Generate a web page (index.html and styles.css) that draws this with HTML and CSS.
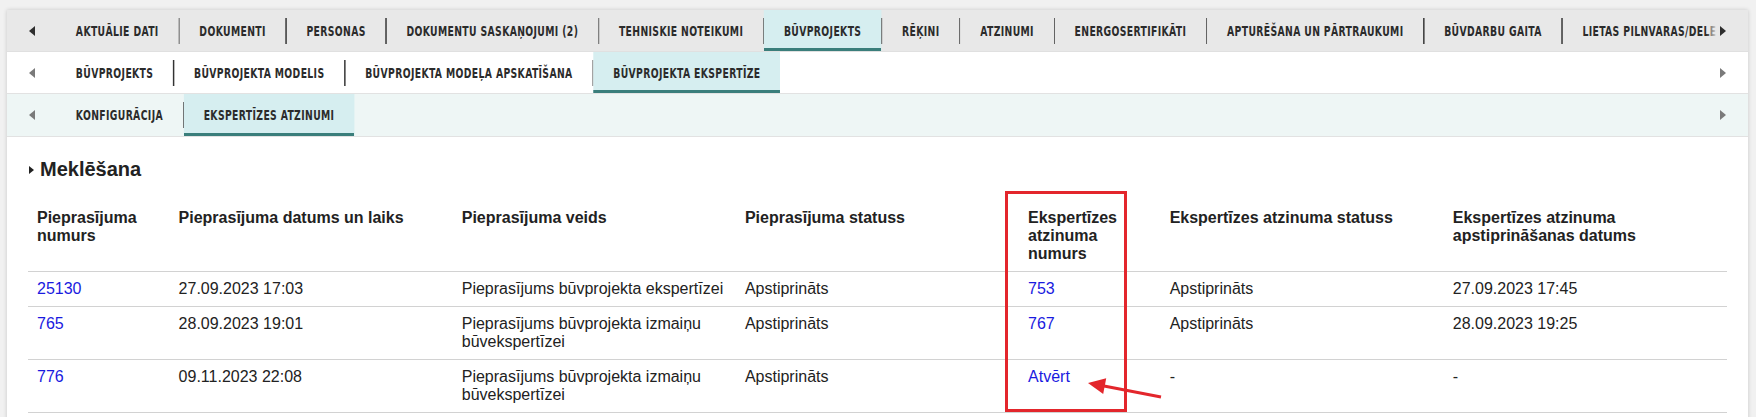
FILE: index.html
```html
<!DOCTYPE html>
<html lang="lv">
<head>
<meta charset="utf-8">
<title>Būvprojekta ekspertīze</title>
<link rel="stylesheet" href="styles.css">
</head>
<body>
<div class="page">
  <div class="panel">
    <div class="tabrow r1">
      <span class="arrow-left"><i class="tri-l"></i></span>
      <div class="tabs">
        <div class="strip">
          <span class="tab">AKTUĀLIE DATI</span><span class="sep"></span>
          <span class="tab">DOKUMENTI</span><span class="sep"></span>
          <span class="tab">PERSONAS</span><span class="sep"></span>
          <span class="tab">DOKUMENTU SASKAŅOJUMI (2)</span><span class="sep"></span>
          <span class="tab">TEHNISKIE NOTEIKUMI</span><span class="sep"></span>
          <span class="tab active">BŪVPROJEKTS</span><span class="sep"></span>
          <span class="tab">RĒĶINI</span><span class="sep"></span>
          <span class="tab">ATZINUMI</span><span class="sep"></span>
          <span class="tab">ENERGOSERTIFIKĀTI</span><span class="sep"></span>
          <span class="tab">APTURĒŠANA UN PĀRTRAUKUMI</span><span class="sep"></span>
          <span class="tab">BŪVDARBU GAITA</span><span class="sep"></span>
          <span class="tab">LIETAS PILNVARAS/DELEĢĒŠANA</span>
        </div>
      </div>
      <span class="arrow-right"><i class="tri-r"></i></span>
    </div>
    <div class="tabrow r2">
      <span class="arrow-left"><i class="tri-l"></i></span>
      <div class="tabs">
        <div class="strip">
          <span class="tab">BŪVPROJEKTS</span><span class="sep"></span>
          <span class="tab">BŪVPROJEKTA MODELIS</span><span class="sep"></span>
          <span class="tab">BŪVPROJEKTA MODEĻA APSKATĪŠANA</span><span class="sep"></span>
          <span class="tab active">BŪVPROJEKTA EKSPERTĪZE</span>
        </div>
      </div>
      <span class="arrow-right"><i class="tri-r"></i></span>
    </div>
    <div class="tabrow r3">
      <span class="arrow-left"><i class="tri-l"></i></span>
      <div class="tabs">
        <div class="strip">
          <span class="tab">KONFIGURĀCIJA</span><span class="sep"></span>
          <span class="tab active">EKSPERTĪZES ATZINUMI</span>
        </div>
      </div>
      <span class="arrow-right"><i class="tri-r"></i></span>
    </div>

    <div class="content">
      <h2 class="section-title"><i class="tri-title"></i>Meklēšana</h2>
      <table class="results">
        <colgroup>
          <col class="c1"><col class="c2"><col class="c2"><col class="c2"><col class="c1"><col class="c2"><col class="c2">
        </colgroup>
        <thead>
          <tr>
            <th>Pieprasījuma numurs</th>
            <th>Pieprasījuma datums un laiks</th>
            <th>Pieprasījuma veids</th>
            <th>Pieprasījuma statuss</th>
            <th>Ekspertīzes atzinuma numurs</th>
            <th>Ekspertīzes atzinuma statuss</th>
            <th>Ekspertīzes atzinuma apstiprināšanas datums</th>
          </tr>
        </thead>
        <tbody>
          <tr>
            <td><a href="#">25130</a></td>
            <td>27.09.2023 17:03</td>
            <td>Pieprasījums būvprojekta ekspertīzei</td>
            <td>Apstiprināts</td>
            <td><a href="#">753</a></td>
            <td>Apstiprināts</td>
            <td>27.09.2023 17:45</td>
          </tr>
          <tr>
            <td><a href="#">765</a></td>
            <td>28.09.2023 19:01</td>
            <td>Pieprasījums būvprojekta izmaiņu būvekspertīzei</td>
            <td>Apstiprināts</td>
            <td><a href="#">767</a></td>
            <td>Apstiprināts</td>
            <td>28.09.2023 19:25</td>
          </tr>
          <tr>
            <td><a href="#">776</a></td>
            <td>09.11.2023 22:08</td>
            <td>Pieprasījums būvprojekta izmaiņu būvekspertīzei</td>
            <td>Apstiprināts</td>
            <td><a href="#">Atvērt</a></td>
            <td>-</td>
            <td>-</td>
          </tr>
        </tbody>
      </table>
    </div>
  </div>

  <div class="mark-box"></div>
  <svg class="mark-arrow" width="90" height="40" viewBox="0 0 90 40" aria-hidden="true">
    <line x1="81" y1="27" x2="24" y2="16" stroke="#e3262c" stroke-width="3"/>
    <polygon points="8,13 23.2,24.1 26.2,8.3" fill="#e3262c"/>
  </svg>
</div>
</body>
</html>
```

FILE: styles.css
```css
html, body {
  margin: 0;
  padding: 0;
  overflow: hidden;
  height: 100%;
}

body {
  background: #f1f1f1;
  font-family: "Liberation Sans", Arial, sans-serif;
  color: #222;
}

.page {
  position: relative;
  padding: 10px 8px 0 7px;
}

.panel {
  background: #fff;
  box-shadow: 0 0 4px rgba(0, 0, 0, 0.18);
  min-height: 420px;
}

/* ---------- tab rows ---------- */
.tabrow {
  display: flex;
  height: 42px;
  box-sizing: border-box;
  border-bottom: 1px solid #e2e2e2;
  --row-bg: #fff;
  background: var(--row-bg);
}

.tabrow.r1 { --row-bg: #e8e8e8; border-bottom-color: #e0e0e0; }
.tabrow.r2 { --row-bg: #ffffff; }
.tabrow.r3 { --row-bg: #eef6f5; height: 43px; }

.arrow-left {
  flex: none;
  width: 49px;
  display: flex;
  align-items: center;
  justify-content: center;
}

.arrow-right {
  flex: none;
  position: relative;
  width: 42px;
  display: flex;
  align-items: center;
  padding-left: 14px;
  box-sizing: border-box;
  background: linear-gradient(to right, rgba(255, 255, 255, 0) 0, var(--row-bg) 11px);
}

.tri-l {
  width: 0;
  height: 0;
  border-top: 5px solid transparent;
  border-bottom: 5px solid transparent;
  border-right: 6px solid #7a7a7a;
}

.tri-r {
  width: 0;
  height: 0;
  border-top: 5px solid transparent;
  border-bottom: 5px solid transparent;
  border-left: 6px solid #7a7a7a;
}

.r1 .tri-l { border-right-color: #2e2e2e; }
.r1 .tri-r { border-left-color: #2e2e2e; }

.tabs {
  flex: 1;
  min-width: 0;
  margin-right: -42px;
  display: flex;
  overflow: hidden;
}

/* The reference uses a tall, very narrow display face; the closest
   installed face is condensed horizontally as a whole strip. */
.strip {
  flex: none;
  display: flex;
  align-items: center;
  height: 100%;
  transform: scaleX(0.735);
  transform-origin: 0 50%;
}

.tab {
  flex: none;
  height: 100%;
  box-sizing: border-box;
  display: flex;
  align-items: center;
  padding: 0 27px;
  font-family: "DejaVu Sans Condensed", "DejaVu Sans", sans-serif;
  font-weight: 700;
  font-size: 14px;
  letter-spacing: 0.5px;
  color: #2b2b2b;
  white-space: nowrap;
}

.tab.active {
  background: #d6eef0;
  box-shadow: inset 0 -3px 0 #3a7e7b;
}

.sep {
  flex: none;
  width: 1.36px;
  height: 26px;
  background: #333;
}

/* ---------- content ---------- */
.content {
  padding: 21px 21px 0 21px;
}

.section-title {
  display: flex;
  align-items: center;
  margin: 0 0 20px;
  font-size: 20px;
  line-height: 23px;
  font-weight: 700;
  color: #222;
}

.tri-title {
  width: 0;
  height: 0;
  margin: 0 6px 0 1px;
  border-top: 4.5px solid transparent;
  border-bottom: 4.5px solid transparent;
  border-left: 5px solid #222;
}

.results {
  width: 100%;
  border-collapse: collapse;
  table-layout: fixed;
  font-size: 16px;
}

.results col.c1 { width: 8.3333%; }
.results col.c2 { width: 16.6667%; }

.results th,
.results td {
  padding: 8px 9px;
  text-align: left;
  vertical-align: top;
  border-bottom: 1px solid #d2d2d2;
}

.results th {
  font-weight: 700;
  color: #222;
}

.results td {
  color: #222;
}

.results a {
  color: #1a1ae0;
  text-decoration: none;
}

/* ---------- annotation overlay ---------- */
.mark-box {
  position: absolute;
  left: 1005px;
  top: 191px;
  width: 122px;
  height: 221px;
  box-sizing: border-box;
  border: 3px solid #e3262c;
}

.mark-arrow {
  position: absolute;
  left: 1080px;
  top: 370px;
}
```
